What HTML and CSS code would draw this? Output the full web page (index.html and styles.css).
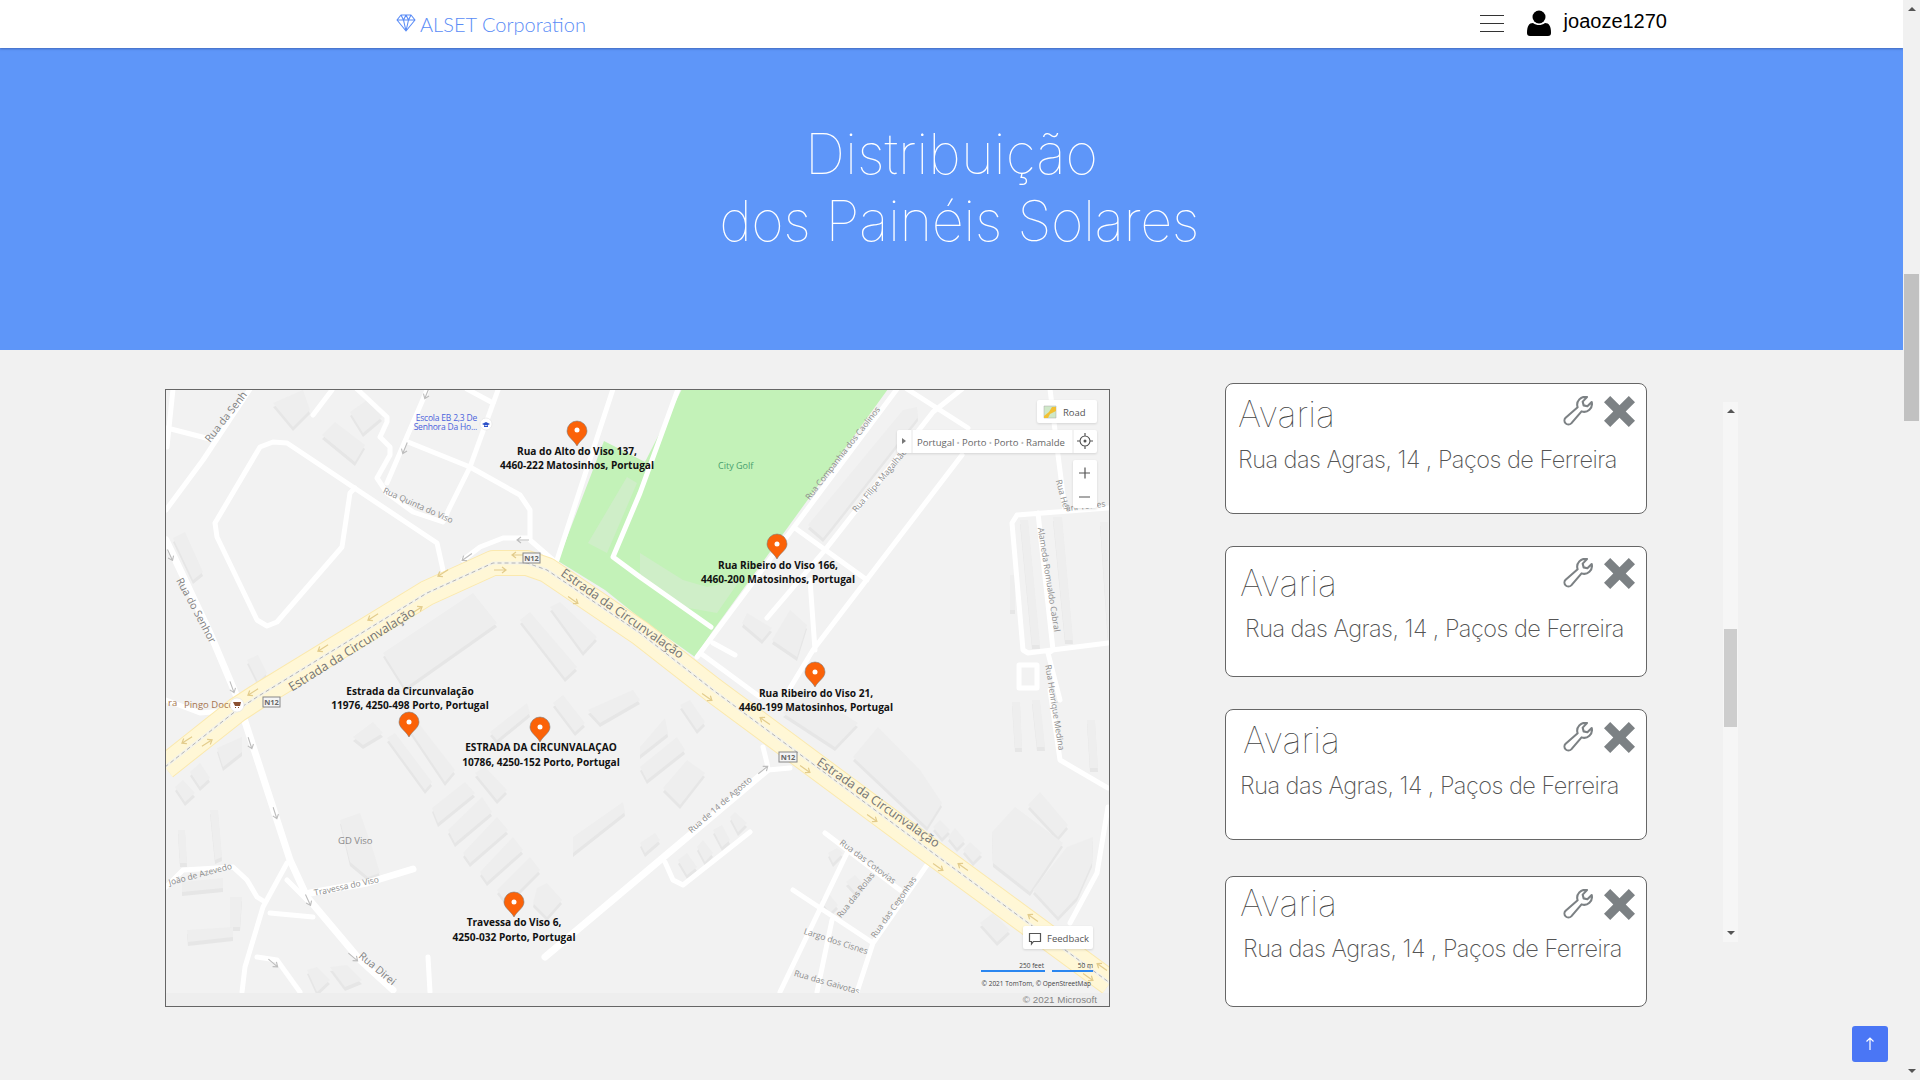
FILE: index.html
```html
<!DOCTYPE html>
<html lang="pt">
<head>
<meta charset="utf-8">
<title>Distribuição dos Painéis Solares</title>
<link rel="stylesheet" href="styles.css">
</head>
<body>
<div class="viewport">
  <div class="page">
    <header class="navbar">
      <a class="brand">
        <svg class="brand-icon" viewBox="0 0 20 18"><path d="M5 1h10l4 5-9 11L1 6zM1 6h18M5 1l2.500 5L10 17l2.500-11L15 1M7.500 6 10 1l2.500 5"/></svg>
        <span>ALSET Corporation</span>
      </a>
      <div class="nav-right">
        <div class="burger"><i></i><i></i><i></i></div>
        <svg class="user-icon" viewBox="0 0 24 26"><circle cx="12" cy="7" r="6.500"/><path d="M0 23c0-7 2-10 6-10 2 1.500 4 2 6 2s4-.5 6-2c4 0 6 3 6 10 0 2-1 3-3 3H3c-2 0-3-1-3-3z"/></svg>
        <span class="username">joaoze1270</span>
      </div>
    </header>
    <section class="hero">
      <h1 class="hero-title"><span>Distribuição</span><span class="hero-line2">dos Painéis Solares</span></h1>
    </section>
    <main class="content">
      <div class="map">
        <svg class="map-svg" viewBox="166 390 943 616">
          <defs>
            <path id="pin" d="M0 14C-3 8-10 5-10-1a10 10 0 0 1 20 0C10 5 3 8 0 14z"/>
            <path id="arr" d="M-6 0H6M2-3l4 3-4 3"/>
            <path id="blds" d="M273 403l30-13 7 20-17 17zM350 412l17-12 15 17-19 16zM322 435l13-13 30 23-10 17zM173 538l12-6 18 40-10 8zM247 660l11-5 9 18-9 9zM383 653l90-60 24 30-92 65zM520 620l10-8 47 55-12 11zM550 607l10-5 37 35-14 15zM387 738l8-5 37 49-7 8zM410 730l10-5 35 45-10 12zM353 737l20-15 10 11-20 12zM490 732l37-29 3 10-33 27zM553 703l10-8 22 28-10 9zM588 710l45-20 7 10-40 23zM432 808l33-26 10 11-37 30zM448 830l34-33 10 15-37 31zM463 853l34-36 11 13-38 33zM480 872l33-35 10 13-36 32zM497 890l33-33 10 13-33 33zM475 773l10-6 22 23-10 10zM340 820l20-7 13 37 7 23-12 4-18-15zM573 837l50-35 2 10-52 41zM537 888l10-5 15 17-15 17-14-14zM175 787l8-7 12 13-10 9zM190 772l10-9 10 15-10 9zM217 748l25-11v15l-19 15zM210 810h8l4 47-7 3zM178 830h7l2 33h-7zM182 882l41-4v10l-41 4zM187 930l46-3v10l-45 5zM230 897h12l-2 30h-10zM307 970l10-3 13 13-13 12zM330 967l17-2 15 15-17 7zM680 705l10-5 15 22-8 8zM640 747l25-29 3 15-28 22zM640 767l37-30 8 13-38 30zM663 788l24-28 18 13-25 32zM783 713l27-20 48 30-23 24zM853 757l25-30 42 43 22 33-15 24zM933 827l7-7 10 10-8 8zM948 837l7-9 10 12-8 8zM963 850l7-8 12 11-9 9zM992 832l23-25 48 36-33 49-37-29zM1028 805l12-13 28 33-10 12zM1033 890l34-43 26-10-1 26-15 34-19 20zM980 923l13-10 17 17-13 12zM640 843l15-10 5 7-15 13zM678 860l9-7 10 14-10 8zM697 847l6-7 10 13-8 9zM713 830l9-5 8 15-8 7zM730 817l5-5 12 11-9 9zM828 853l9-5 6 5-10 10zM820 900l8-7 10 12-8 8zM846 882l9-7 9 10-8 8zM808 525l95-115 14-3 1 10-86 110-9 11zM742 623l5-10 25 15-10 12zM772 640l18-30 17 15-10 32zM1020 520h8l12 125h-8zM1053 517h9l11 123h-8zM1100 522h8v118zM1010 575h5v35h-5zM1012 702h8l2 46h-7zM1032 700h8l5 47h-8zM1087 720h8l3 48h-8z"/>
          </defs>

          <rect class="land" x="166" y="390" width="943" height="616"/>
          <path class="park" d="M604 441l41 21 37-73h206L712 632l-17 25-55-39-35-28-47-29z"/>
          <path class="park-bld" d="M640 553l43 27 24 7 33-7-23 33-34-6-43-30zM588 543l39-66 10 6-30 70z"/>
          <use class="bld-shade" href="#blds" y="4"/>
          <use class="bld" href="#blds"/>

          <g class="roads">
            <path d="M166 510l37-50 47-71M173 389l-6 58M167 428l43 11M313 415l19-25"/>
            <path d="M443 570l-6-27-150-100-14-1-13 5-45 76 2 14 40 83 10 6 10-4 65-75 8-54 5-5"/>
            <path d="M357 389l30 28v5l-7 15 10 10v8l-13 23 10 15 26 19 30 10 7-15 20-40 28-77"/>
            <path d="M427 390l-40 93M467 389l26 14M408 442l62 25 50 28 10 15v30l23 20M530 538h-27l-23 9-17 13"/>
            <path class="wide" d="M166 540l44 93 27 64 53 163 17 37 53 63 33 30"/>
            <path d="M166 700l34 13 37-3M287 863l-24 44-18 60-3 25M270 913l43 4M287 880l20 20M166 887l17-17 50-3 14 13 10 17 8 5"/>
            <path class="wide" d="M310 893l57-10 46-14"/>
            <path d="M257 957l20 3 23 32M428 957l2 35"/>
            <path class="wide" d="M545 957l95-80 127-107"/>
            <path d="M665 862l8 18 10 5 67-53M825 833l75 57M927 865l-54 78-16 49M793 890l80 53M847 853l-67 139M832 920l-15 72M1108 807l-11 66-27 50M1050 690l10 70 48 28M763 747l4 16 1 7 22-2"/>
            <path d="M897 389L697 657M907 389l61 39M962 389l-29 23-108 138-58 68M795 528l72 52M962 455L813 650l-26 43M810 580l5 70M703 655l57 42M713 643l22 12M678 389l-38 104-27 64 27 20 71 50M613 389l-56 171"/>
            <path d="M1108 508l-91 7-5 8 11 127 5 3 80-10M1038 513l15 137-5 3 12 47M1050 389l7 58 8 63"/>
            <path d="M1019 665h18v23h-18z"/>
          </g>

          <g class="highway">
            <path class="hw-edge" d="M165 767l72-57 20-13 170-104 66-30h34l20 7 93 63 73 57 77 57 143 106 177 130"/>
            <path class="hw-fill" d="M165 767l72-57 20-13 170-104 66-30h34l20 7 93 63 73 57 77 57 143 106 177 130"/>
            <path class="hw-mid" d="M165 767l72-57 20-13 170-104 66-30h34l20 7 93 63 73 57 77 57 143 106 177 130"/>
            <path class="hw-dash" d="M165 767l72-57 20-13 170-104 66-30h34l20 7 93 63 73 57 77 57 143 106 177 130"/>
          </g>

          <g class="arrows-y">
            <use href="#arr" transform="translate(443 573) rotate(148)"/>
            <use href="#arr" transform="translate(373 617) rotate(148)"/>
            <use href="#arr" transform="translate(323 648) rotate(148)"/>
            <use href="#arr" transform="translate(253 692) rotate(148)"/>
            <use href="#arr" transform="translate(500 570)"/>
            <use href="#arr" transform="translate(417 610) rotate(-32)"/>
            <use href="#arr" transform="translate(573 600) rotate(35)"/>
            <use href="#arr" transform="translate(518 555) rotate(180)"/>
            <use href="#arr" transform="translate(707 697) rotate(35)"/>
            <use href="#arr" transform="translate(765 721) rotate(215)"/>
            <use href="#arr" transform="translate(805 769) rotate(35)"/>
            <use href="#arr" transform="translate(872 818) rotate(35)"/>
            <use href="#arr" transform="translate(963 867) rotate(215)"/>
            <use href="#arr" transform="translate(938 867) rotate(35)"/>
            <use href="#arr" transform="translate(1033 918) rotate(215)"/>
            <use href="#arr" transform="translate(1088 977) rotate(35)"/>
            <use href="#arr" transform="translate(1102 967) rotate(215)"/>
            <use href="#arr" transform="translate(187 740) rotate(148)"/>
            <use href="#arr" transform="translate(207 743) rotate(-32)"/>
          </g>
          <g class="arrows-g">
            <use href="#arr" transform="translate(170 555) rotate(65)"/>
            <use href="#arr" transform="translate(232 687) rotate(70)"/>
            <use href="#arr" transform="translate(250 743) rotate(72)"/>
            <use href="#arr" transform="translate(275 813) rotate(72)"/>
            <use href="#arr" transform="translate(308 900) rotate(65)"/>
            <use href="#arr" transform="translate(353 957) rotate(40)"/>
            <use href="#arr" transform="translate(405 448) rotate(112)"/>
            <use href="#arr" transform="translate(427 393) rotate(112)"/>
            <use href="#arr" transform="translate(523 540) rotate(180)"/>
            <use href="#arr" transform="translate(467 557) rotate(145)"/>
            <use href="#arr" transform="translate(273 963) rotate(40)"/>
            <use href="#arr" transform="translate(763 770) rotate(-38)"/>
          </g>

          <g class="shield"><rect x="523" y="553" width="17" height="10"/><rect x="263" y="697" width="17" height="10"/><rect x="779" y="752" width="18" height="10"/></g>
          <g class="shield-t"><text x="531.500" y="561">N12</text><text x="271.500" y="705">N12</text><text x="788" y="760">N12</text></g>

          <g class="lbl-lg">
            <text transform="translate(354 653) rotate(-32)">Estrada da Circunvalação</text>
            <text transform="translate(620 617) rotate(35)">Estrada da Circunvalação</text>
            <text transform="translate(876 806) rotate(35)">Estrada da Circunvalação</text>
          </g>
          <g class="lbl-md">
            <text class="lbl-start" transform="translate(210 443) rotate(-52)">Rua da Senh</text>
            <text transform="translate(193 612) rotate(62)">Rua do Senhor</text>
            <text class="lbl-start" transform="translate(358 957) rotate(40)">Rua Direi</text>
          </g>
          <g class="lbl">
            <text transform="translate(417 508) rotate(24)">Rua Quinta do Viso</text>
            <text transform="translate(845 455) rotate(-52)">Rua Companhia dos Caolinos</text>
            <text transform="translate(883 481) rotate(-50)">Rua Filipe Magalhães</text>
            <text transform="translate(1046 580) rotate(81)">Alameda Romualdo Cabral</text>
            <text transform="translate(1052 708) rotate(81)">Rua Henrique Medina</text>
            <text transform="translate(722 807) rotate(-41)">Rua de 14 de Agosto</text>
            <text transform="translate(866 864) rotate(37)">Rua das Cotovias</text>
            <text transform="translate(858 897) rotate(-52)">Rua das Rolas</text>
            <text transform="translate(896 909) rotate(-55)">Rua das Cegonhas</text>
            <text transform="translate(835 944) rotate(18)">Largo dos Cisnes</text>
            <text transform="translate(826 985) rotate(16)">Rua das Gaivotas</text>
            <text transform="translate(347 889) rotate(-12)">Travessa do Viso</text>
            <text transform="translate(201 877) rotate(-15)">João de Azevedo</text>
            <text transform="translate(1060 496) rotate(75)">Rua Her</text>
            <text transform="translate(1086 509) rotate(-7)">âni Torres</text>
          </g>
          <text class="poi-g" x="338" y="844">GD Viso</text>
          <text class="poi-s" x="184" y="708">Pingo Doce</text>
          <text class="poi-s" x="168" y="706">ra</text>
          <text class="poi-p" x="718" y="469">City Golf</text>
          <text class="poi-e" x="477" y="421">Escola EB 2,3 De</text>
          <text class="poi-e" x="477" y="430">Senhora Da Ho...</text>
          <circle class="poi-c" cx="486" cy="424" r="6"/>
          <path class="poi-b" d="M482 424l4-2 4 2-4 2zM484 425v2h4v-2z"/>
          <circle class="poi-c" cx="237" cy="705" r="7"/>
          <path class="poi-k" d="M233 702h8l-1 4h-5zM235 707h1v1h-1zM238 707h1v1h-1z"/>

          <g class="pin">
            <use href="#pin" x="577" y="432"/>
            <use href="#pin" x="777" y="545"/>
            <use href="#pin" x="815" y="673"/>
            <use href="#pin" x="409" y="723"/>
            <use href="#pin" x="540" y="728"/>
            <use href="#pin" x="514" y="903"/>
          </g>
          <g class="pin-dot">
            <circle cx="577" cy="430" r="2.500"/><circle cx="777" cy="544" r="2.500"/><circle cx="815" cy="672" r="2.500"/><circle cx="409" cy="722" r="2.500"/><circle cx="540" cy="727" r="2.500"/><circle cx="514" cy="902" r="2.500"/>
          </g>
          <g class="pin-lbl">
            <text x="577" y="455">Rua do Alto do Viso 137,</text><text x="577" y="469">4460-222 Matosinhos, Portugal</text>
            <text x="778" y="569">Rua Ribeiro do Viso 166,</text><text x="778" y="583">4460-200 Matosinhos, Portugal</text>
            <text x="816" y="697">Rua Ribeiro do Viso 21,</text><text x="816" y="711">4460-199 Matosinhos, Portugal</text>
            <text x="410" y="695">Estrada da Circunvalação</text><text x="410" y="709">11976, 4250-498 Porto, Portugal</text>
            <text x="541" y="751">ESTRADA DA CIRCUNVALAÇAO</text><text x="541" y="766">10786, 4250-152 Porto, Portugal</text>
            <text x="514" y="926">Travessa do Viso 6,</text><text x="514" y="941">4250-032 Porto, Portugal</text>
          </g>

          <rect class="attrib" x="166" y="993" width="943" height="13"/>
          <text class="ms" x="1097" y="1003">© 2021 Microsoft</text>
          <path class="scale" d="M981 971h64M1052 971h41"/>
          <text class="scale-t" x="1044" y="968">250 feet</text>
          <text class="scale-t" x="1093" y="968">50 m</text>
          <text class="scale-t" x="1091" y="986">© 2021 TomTom, © OpenStreetMap</text>

          <g class="ctrl">
            <rect x="1037" y="400" width="60" height="23" rx="2"/>
            <rect x="897" y="430" width="200" height="23" rx="2"/>
            <rect x="1073" y="460" width="24" height="48" rx="2"/>
            <rect x="1023" y="926" width="70" height="23" rx="2"/>
          </g>
          <path class="ctrl-line" d="M912 430v23M1073 430v23"/>
          <path class="road-ico1" d="M1044 406h12v12h-12z"/>
          <path class="road-ico2" d="M1044 416l5-4 3-5h4v4l-6 3-2 4h-4z"/>
          <text class="ctrl-t" x="1063" y="416">Road</text>
          <text class="crumb" x="917" y="446">Portugal<tspan class="sep"> • </tspan>Porto<tspan class="sep"> • </tspan>Porto<tspan class="sep"> • </tspan>Ramalde</text>
          <path class="ctrl-tri" d="M902 438l4 3-4 3z"/>
          <path class="ctrl-ic" d="M1085 436a5 5 0 1 0 .01 0M1085 433v3M1085 446v3M1077 441h3M1090 441h3M1079 473h11M1085 467.500v11M1079 497h11"/>
          <circle class="ctrl-dot" cx="1085" cy="441" r="1.500"/>
          <path class="ctrl-ic" d="M1029.500 933.500h11v8h-7l-2 2.500v-2.500h-2z"/>
          <text class="ctrl-t" x="1047" y="942">Feedback</text>
        </svg>
      </div>

      <div class="side">
        <div class="list">
          <article class="card card-a">
            <div class="tools tools-a"><svg class="wrench" viewBox="0 0 16 16"><path d="M15.300 3.200a4.200 4.200 0 0 1-5.400 5L4.400 14.600a2.100 2.100 0 0 1-3-3L7.800 6a4.200 4.200 0 0 1 5-5.400L10.500 3l.5 2 2 .5z"/></svg><svg class="close" viewBox="0 0 30 30"><path d="M6 0l9 9 9-9 6 6-9 9 9 9-6 6-9-9-9 9-6-6 9-9-9-9z"/></svg></div>
            <h2 class="card-title">Avaria</h2>
            <p class="card-addr">Rua das Agras, 14 , Paços de Ferreira</p>
          </article>
          <article class="card card-b">
            <div class="tools tools-b"><svg class="wrench" viewBox="0 0 16 16"><path d="M15.300 3.200a4.200 4.200 0 0 1-5.400 5L4.400 14.600a2.100 2.100 0 0 1-3-3L7.800 6a4.200 4.200 0 0 1 5-5.400L10.500 3l.5 2 2 .5z"/></svg><svg class="close" viewBox="0 0 30 30"><path d="M6 0l9 9 9-9 6 6-9 9 9 9-6 6-9-9-9 9-6-6 9-9-9-9z"/></svg></div>
            <h2 class="card-title">Avaria</h2>
            <p class="card-addr">Rua das Agras, 14 , Paços de Ferreira</p>
          </article>
          <article class="card card-c">
            <div class="tools tools-a"><svg class="wrench" viewBox="0 0 16 16"><path d="M15.300 3.200a4.200 4.200 0 0 1-5.400 5L4.400 14.600a2.100 2.100 0 0 1-3-3L7.800 6a4.200 4.200 0 0 1 5-5.400L10.500 3l.5 2 2 .5z"/></svg><svg class="close" viewBox="0 0 30 30"><path d="M6 0l9 9 9-9 6 6-9 9 9 9-6 6-9-9-9 9-6-6 9-9-9-9z"/></svg></div>
            <h2 class="card-title">Avaria</h2>
            <p class="card-addr">Rua das Agras, 14 , Paços de Ferreira</p>
          </article>
          <article class="card card-d">
            <div class="tools tools-a"><svg class="wrench" viewBox="0 0 16 16"><path d="M15.300 3.200a4.200 4.200 0 0 1-5.400 5L4.400 14.600a2.100 2.100 0 0 1-3-3L7.800 6a4.200 4.200 0 0 1 5-5.400L10.500 3l.5 2 2 .5z"/></svg><svg class="close" viewBox="0 0 30 30"><path d="M6 0l9 9 9-9 6 6-9 9 9 9-6 6-9-9-9 9-6-6 9-9-9-9z"/></svg></div>
            <h2 class="card-title">Avaria</h2>
            <p class="card-addr">Rua das Agras, 14 , Paços de Ferreira</p>
          </article>
        </div>
        <div class="list-scroll">
          <span class="tri-up"></span>
          <span class="list-thumb"></span>
          <span class="tri-down"></span>
        </div>
      </div>
    </main>
    <a class="to-top"><svg viewBox="0 0 12 14"><path d="M6 13V1M2.500 4.500 6 1l3.500 3.500"/></svg></a>
  </div>
  <div class="page-scroll">
    <span class="tri-up"></span>
    <span class="page-thumb"></span>
    <span class="tri-down"></span>
  </div>
</div>
</body>
</html>
```
FILE: styles.css
```css
* { box-sizing: border-box; }
html, body { margin: 0; padding: 0; height: 100%; overflow: hidden; }
body { background: #f1f1f1; font-family: "Inter", "Liberation Sans", sans-serif; }

.viewport { display: flex; width: 1920px; height: 1080px; }
.page { position: relative; flex: 0 0 1903px; height: 1080px; overflow: hidden; }

/* navbar */
.navbar { display: flex; justify-content: space-between; align-items: center; height: 48px; padding: 0 236px 0 396px; background: #fff; box-shadow: 0 1px 2px rgba(40, 70, 140, .55); position: relative; }
.brand { display: flex; align-items: center; gap: 4px; color: #5a8cf6; font: 300 20px "Lato", sans-serif; }
.brand-icon { width: 20px; height: 18px; margin-top: -3px; fill: none; stroke: #5a8cf6; stroke-width: 1.100; stroke-linejoin: round; }
.nav-right { display: flex; align-items: center; }
.burger { display: flex; flex-direction: column; gap: 7px; width: 24px; margin: -1px 23px 0 0; }
.burger i { display: block; height: 1px; background: #333; }
.user-icon { width: 24px; height: 26px; fill: #000; margin: -3px 13px 0 0; }
.username { color: #000; font: 400 20px "Liberation Sans", sans-serif; margin-top: -5px; }

/* hero */
.hero { height: 302px; padding-top: 73px; background: #5e96f9; }
.hero-title { display: flex; flex-direction: column; align-items: center; margin: 0; color: #fff; font-weight: 100; font-size: 56px; line-height: 67px; }
.hero-line2 { margin-left: 15px; letter-spacing: -.5px; }

/* content */
.content { display: flex; align-items: flex-start; padding-left: 165px; }
.map { flex: 0 0 945px; height: 618px; margin-top: 39px; border: 1px solid #666; background: #f2f2f2; }
.map-svg { display: block; width: 943px; height: 616px; font-family: "Open Sans", "Noto Sans", sans-serif; }

.land { fill: #f2f2f2; }
.park { fill: #c3f2b8; }
.park-bld { fill: #cfeec8; }
.bld { fill: #eeeeee; }
.bld-shade { fill: #e6e6e6; }
.roads path { fill: none; stroke: #fff; stroke-width: 5; stroke-linejoin: round; stroke-linecap: round; }
.roads .wide { stroke-width: 7; }
.highway path { fill: none; stroke-linejoin: round; }
.hw-edge { stroke: #fbe9ae; stroke-width: 26; }
.hw-fill { stroke: #fff7d6; stroke-width: 24; }
.hw-mid { stroke: #f4f3ea; stroke-width: 3; }
.hw-dash { stroke: #b4b4b4; stroke-width: 1; stroke-dasharray: 4 3; }
.arrows-y use { fill: none; stroke: #e3cc8c; stroke-width: 1.200; }
.arrows-g use { fill: none; stroke: #bdbdbd; stroke-width: 1.100; }
.shield rect { fill: #f4f4f4; stroke: #888; stroke-width: 1; }
.shield-t text { fill: #666; font-size: 7.500px; font-weight: 700; text-anchor: middle; }
.lbl-lg text { fill: #747474; font-size: 12.500px; text-anchor: middle; }
.lbl-md text { fill: #808080; font-size: 10.500px; text-anchor: middle; }
.lbl-md .lbl-start { text-anchor: start; }
.lbl text { fill: #8c8c8c; font-size: 8.500px; text-anchor: middle; }
.poi-g { fill: #8a8a8a; font-size: 9.500px; }
.poi-s { fill: #a6754f; font-size: 9.500px; }
.poi-p { fill: #46a06e; font-size: 9px; }
.poi-e { fill: #4a62dc; font-size: 8.500px; text-anchor: end; letter-spacing: -.2px; }
.poi-c { fill: #fff; stroke: #ddd; stroke-width: .5; }
.poi-b { fill: #2a4fc8; }
.poi-k { fill: #8a5030; }
.pin use { fill: #fb6208; stroke: rgba(120, 120, 120, .55); stroke-width: 1; }
.pin-dot circle { fill: #fff; }
.pin-lbl text { fill: #111; font-size: 10.150px; font-weight: 700; text-anchor: middle; }
.attrib { fill: #eeeeee; }
.ms { fill: #858585; font-size: 9.800px; text-anchor: end; font-family: "Liberation Sans", sans-serif; }
.scale { fill: none; stroke: #2a86f0; stroke-width: 2; }
.scale-t { fill: #444; font-size: 6.500px; text-anchor: end; }
.ctrl rect { fill: #fff; filter: drop-shadow(0 1px 1px rgba(0, 0, 0, .12)); }
.ctrl-line { stroke: #e8e8e8; stroke-width: 1; }
.road-ico1 { fill: #cfe8c8; stroke: #aaa; stroke-width: .5; }
.road-ico2 { fill: #f2c033; }
.ctrl-t { fill: #555; font-size: 9.500px; }
.crumb { fill: #666; font-size: 9.500px; }
.sep { fill: #bbb; font-size: 8.500px; }
.ctrl-tri { fill: #777; }
.ctrl-ic { fill: none; stroke: #555; stroke-width: 1.200; }
.ctrl-dot { fill: #555; }

/* side list */
.side { display: flex; flex: 0 0 auto; margin-left: 115px; }
.list { display: flex; flex-direction: column; flex: none; width: 422px; margin-top: 33px; }
.card { position: relative; background: #fff; border: 1px solid #666; border-radius: 8px; height: 131px; }
.card-a { padding: 12px 0 0 12px; }
.card-b { margin-top: 32px; padding: 18px 0 0 14px; }
.card-b .card-addr { padding-left: 5px; }
.card-c { height: 131px; margin-top: 32px; padding: 12px 0 0 17px; }
.card-c .card-addr { margin-left: -3px; }
.card-d { margin-top: 36px; padding: 8px 0 0 14px; }
.card-d .card-addr { margin-left: 3px; }
.tools { position: absolute; right: 11px; display: flex; align-items: flex-start; gap: 11px; }
.tools-a { top: 12px; }
.tools-b { top: 11px; }
.wrench { width: 30px; height: 30px; }
.wrench path { fill: none; stroke: #7c8184; stroke-width: 1.100; stroke-linejoin: round; }
.close { width: 31px; height: 31px; fill: #7c8184; }
.card-title { margin: 0; color: #444; font-size: 36px; line-height: 36px; font-weight: 100; }
.card-addr { margin: 12px 0 0; color: #555; font-size: 23.500px; line-height: 32px; font-weight: 200; letter-spacing: -.53px; white-space: nowrap; }

.list-scroll { display: flex; flex-direction: column; flex: none; width: 15px; height: 540px; margin: 52px 0 0 76px; padding: 0 1px; background: #f6f6f6; }
.tri-up, .tri-down { display: block; flex: none; width: 0; height: 0; align-self: center; border-left: 4px solid transparent; border-right: 4px solid transparent; }
.tri-up { border-bottom: 4px solid #555; }
.tri-down { border-top: 4px solid #555; }
.list-scroll .tri-up { margin-top: 7px; }
.list-scroll .tri-down { margin-top: 204px; }
.list-thumb { display: block; height: 98px; margin-top: 216px; background: #cdcdcd; }

.to-top { position: absolute; left: 1852px; top: 1026px; display: flex; align-items: center; justify-content: center; width: 36px; height: 36px; background: #4a76f5; border-radius: 3px; }
.to-top svg { width: 12px; height: 14px; fill: none; stroke: #fff; stroke-width: 1.200; }

.page-scroll { display: flex; flex-direction: column; flex: 0 0 17px; height: 1080px; background: #f1f1f1; }
.page-scroll .tri-up { margin-top: 7px; }
.page-thumb { display: block; width: 15px; height: 147px; margin: 263px 0 0 1px; background: #c1c1c1; }
.page-scroll .tri-down { margin-top: 648px; }
```
